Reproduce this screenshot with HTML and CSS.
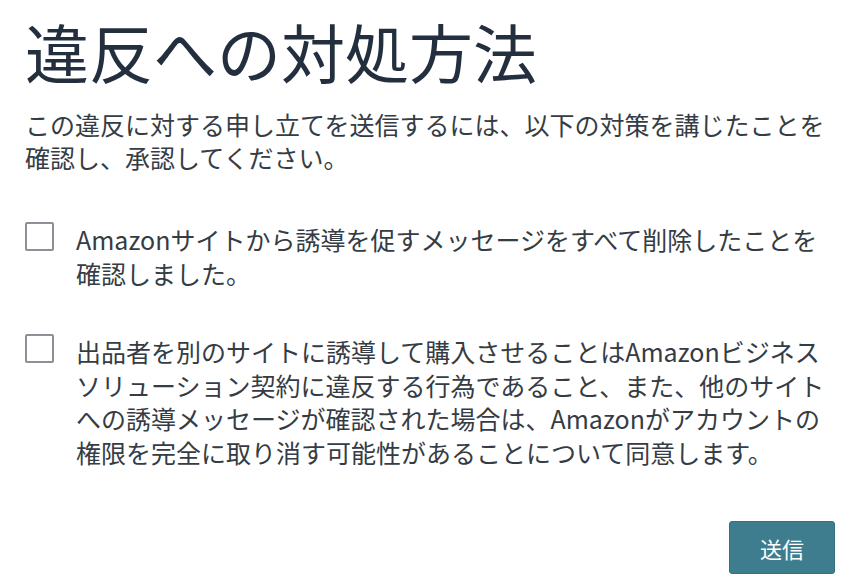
FILE: index.html
```html
<!DOCTYPE html>
<html lang="ja">
<head>
<meta charset="utf-8">
<title>違反への対処方法</title>
<link rel="stylesheet" href="styles.css">
</head>
<body>
<main class="page">
  <h1 class="title">違反への対処方法</h1>
  <p class="intro">この違反に対する申し立てを送信するには、以下の対策を講じたことを確認し、承認してください。</p>
  <ul class="checks">
    <li class="check-item">
      <span class="checkbox"></span>
      <span class="check-text">Amazonサイトから誘導を促すメッセージをすべて削除したことを確認しました。</span>
    </li>
    <li class="check-item second">
      <span class="checkbox"></span>
      <span class="check-text">出品者を別のサイトに誘導して購入させることはAmazonビジネスソリューション契約に違反する行為であること、また、他のサイトへの誘導メッセージが確認された場合は、Amazonがアカウントの権限を完全に取り消す可能性があることについて同意します。</span>
    </li>
  </ul>
  <div class="actions">
    <button class="submit" type="button">送信</button>
  </div>
</main>
</body>
</html>
```

FILE: styles.css
```css
html, body {
  margin: 0;
  padding: 0;
  background: #ffffff;
}

body {
  font-family: "Noto Sans CJK JP", "Noto Sans", sans-serif;
  color: #353c44;
}

.page {
  width: 810px;
  padding: 11px 0 0 25px;
}

.title {
  margin: 0;
  font-size: 64px;
  line-height: 78px;
  font-weight: 400;
  color: #232f3e;
}

.intro {
  margin: 19px 0 0;
  font-size: 25px;
  line-height: 33px;
}

.checks {
  list-style: none;
  margin: 49px 0 0;
  padding: 0;
  display: flex;
  flex-direction: column;
  gap: 45px;
}

.check-item {
  display: flex;
  align-items: flex-start;
  gap: 22px;
  font-size: 25px;
  line-height: 33.5px;
}

.checkbox {
  flex: none;
  width: 25px;
  height: 25px;
  margin-top: -1px;
  border: 2px solid #8d9096;
  border-radius: 2px;
  background: #ffffff;
}

.check-text {
  flex: 1;
}

.actions {
  display: flex;
  justify-content: flex-end;
  margin-top: 52px;
}

.submit {
  width: 106px;
  height: 53px;
  border: 1px solid #35707f;
  border-radius: 3px;
  background: #3d7d8e;
  color: #ffffff;
  font-family: "Noto Sans CJK JP", sans-serif;
  font-size: 22px;
  line-height: 1;
  padding: 0;
}
```
